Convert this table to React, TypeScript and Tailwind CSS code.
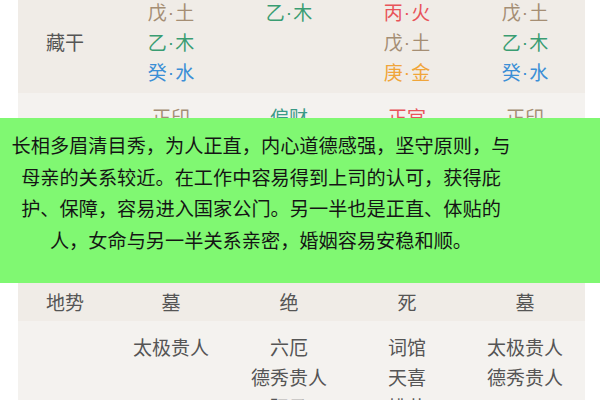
import React from "react";

const C = {
  earth: "text-[#a58e74]",
  wood: "text-[#3a9d72]",
  water: "text-[#3b8fd6]",
  fire: "text-[#e8545a]",
  metal: "text-[#f0a53a]",
};

type Item = { s: string; e: string; c: string };

const cang: Item[][] = [
  [
    { s: "戊", e: "土", c: C.earth },
    { s: "乙", e: "木", c: C.wood },
    { s: "癸", e: "水", c: C.water },
  ],
  [{ s: "乙", e: "木", c: C.wood }],
  [
    { s: "丙", e: "火", c: C.fire },
    { s: "戊", e: "土", c: C.earth },
    { s: "庚", e: "金", c: C.metal },
  ],
  [
    { s: "戊", e: "土", c: C.earth },
    { s: "乙", e: "木", c: C.wood },
    { s: "癸", e: "水", c: C.water },
  ],
];

const shishen = [
  { t: "正印", c: C.earth },
  { t: "偏财", c: "text-[#3a9a86]" },
  { t: "正官", c: C.fire },
  { t: "正印", c: C.earth },
];

const shensha = [
  ["太极贵人"],
  ["六厄", "德秀贵人", "驿马"],
  ["词馆", "天喜", "桃花"],
  ["太极贵人", "德秀贵人"],
];

const lines = [
  "长相多眉清目秀，为人正直，内心道德感强，坚守原则，与",
  "母亲的关系较近。在工作中容易得到上司的认可，获得庇",
  "护、保障，容易进入国家公门。另一半也是正直、体贴的",
  "人，女命与另一半关系亲密，婚姻容易安稳和顺。",
];

export default function App() {
  return (
    <div
      className="relative w-[600px] h-[400px] overflow-hidden bg-white"
      style={{ fontFamily: '"Noto Sans CJK SC", "Noto Sans", sans-serif' }}
    >
      <div className="ml-[18px] w-[567px] -mt-[9px] text-[19px] leading-[30px] text-[#555]">
        {/* 藏干 */}
        <div className="grid grid-cols-[94px_118px_118px_118px_118px] bg-[#f0ece7] py-[6px]">
          <div className="flex items-center justify-center">藏干</div>
          {cang.map((col, i) => (
            <div key={i} className="flex flex-col items-center">
              {col.map((it, j) => (
                <div key={j} className={`flex h-[30px] items-center ${it.c}`}>
                  <span>{it.s}</span>
                  <span className="font-['Liberation_Sans',sans-serif] leading-none mx-[1px]">·</span>
                  <span>{it.e}</span>
                </div>
              ))}
            </div>
          ))}
        </div>
        {/* 十神 */}
        <div className="grid grid-cols-[94px_118px_118px_118px_118px] bg-[#f4f2ef] pt-[9px] h-[188px]">
          <div />
          {shishen.map((s, i) => (
            <div key={i} className={`flex justify-center ${s.c}`}>
              {s.t}
            </div>
          ))}
        </div>
        {/* 地势 */}
        <div className="grid grid-cols-[94px_118px_118px_118px_118px] bg-[#f0ece7] pt-[6px] h-[40px]">
          <div className="flex justify-center">地势</div>
          <div className="flex justify-center">墓</div>
          <div className="flex justify-center">绝</div>
          <div className="flex justify-center">死</div>
          <div className="flex justify-center">墓</div>
        </div>
        {/* 神煞 */}
        <div className="grid grid-cols-[94px_118px_118px_118px_118px] bg-[#f4f2ef] pt-[11px] pb-[10px]">
          <div />
          {shensha.map((col, i) => (
            <div key={i} className="flex flex-col items-center">
              {col.map((t, j) => (
                <div key={j}>{t}</div>
              ))}
            </div>
          ))}
        </div>
      </div>
      {/* green overlay */}
      <div className="absolute left-0 top-[118px] w-[600px] h-[165px] bg-[#80f872] pt-[12px]">
        <div className="w-[522px] flex flex-col items-center text-[19.2px] leading-[31.7px] text-[#151515]">
          {lines.map((l, i) => (
            <div key={i} className="whitespace-nowrap">
              {l}
            </div>
          ))}
        </div>
      </div>
    </div>
  );
}
